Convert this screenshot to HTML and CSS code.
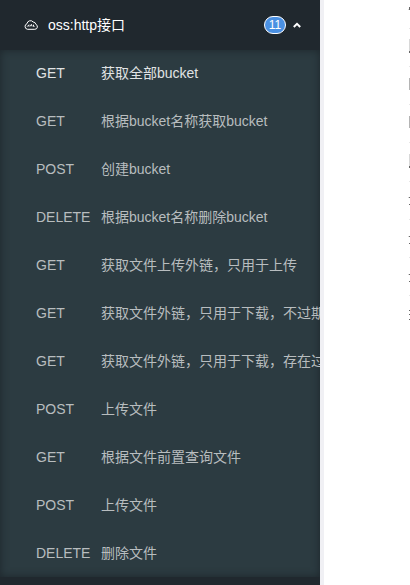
FILE: index.html
```html
<!DOCTYPE html>
<html lang="zh-CN">
<head>
<meta charset="utf-8">
<title>oss:http接口</title>
<link rel="stylesheet" href="styles.css">
</head>
<body>
<div class="app">
  <nav class="sidebar">
    <header class="group">
      <svg class="cloud" viewBox="0 0 14 10" fill="none" stroke="currentColor">
        <path d="M3.5 9.3h7.3a2.6 2.6 0 0 0 1-5A2.7 2.7 0 0 0 9.2 2 3.5 3.5 0 0 0 3 3.7 2.9 2.9 0 0 0 3.5 9.3z"/>
        <path d="M3.2 6.6l1.7-1.8v1.8M6.2 6.4l1.2-2 .7 2M9.5 4.7v1.7h1"/>
      </svg>
      <span class="title">oss:http接口</span>
      <span class="badge">11</span>
      <svg class="arrow" viewBox="0 0 8 6" fill="none" stroke="currentColor" stroke-width="2"><path d="M.8 5L4 1.8 7.2 5"/></svg>
    </header>
    <ul class="menu">
      <li class="active"><span class="method">GET</span><span>获取全部bucket</span></li>
      <li><span class="method">GET</span><span>根据bucket名称获取bucket</span></li>
      <li><span class="method">POST</span><span>创建bucket</span></li>
      <li><span class="method">DELETE</span><span>根据bucket名称删除bucket</span></li>
      <li><span class="method">GET</span><span>获取文件上传外链，只用于上传</span></li>
      <li><span class="method">GET</span><span>获取文件外链，只用于下载，不过期</span></li>
      <li><span class="method">GET</span><span>获取文件外链，只用于下载，存在过期</span></li>
      <li><span class="method">POST</span><span>上传文件</span></li>
      <li><span class="method">GET</span><span>根据文件前置查询文件</span></li>
      <li><span class="method">POST</span><span>上传文件</span></li>
      <li><span class="method">DELETE</span><span>删除文件</span></li>
    </ul>
  </nav>
  <main class="content">
    <svg class="edge" viewBox="0 0 2 585" shape-rendering="crispEdges">
      <path fill="#e6e6e6" d="M1 28h1v1h-1zM1 66h1v1h-1zM1 104h1v1h-1zM1 142h1v1h-1zM1 181h1v1h-1zM1 219h1v1h-1zM1 257h1v1h-1zM1 295h1v1h-1z"/>
      <path fill="#d8d8d8" d="M1 39h1v12h-1zM1 154h1v12h-1zM0 9h1v1h-1zM0 197h1v1h-1zM0 236h1v1h-1zM0 274h1v1h-1z"/>
      <path fill="#b4b4b4" d="M1 78h1v12h-1zM1 116h1v12h-1z"/>
      <path fill="#666" d="M1 7h1v3h-1zM1 51h1v2h-1zM1 166h1v2h-1zM1 197h1v1h-1zM1 204h1v1h-1zM1 236h1v1h-1zM1 243h1v1h-1zM1 274h1v1h-1zM1 281h1v1h-1zM1 310h1v1h-1zM1 314h1v1h-1zM1 319h1v1h-1z"/>
    </svg>
  </main>
</div>
</body>
</html>
```
FILE: styles.css
```css
body {
  margin: 0;
  font: 14px/20px "Liberation Sans", "Noto Sans CJK SC", sans-serif;
}
.app {
  display: flex;
  height: 585px;
  overflow: hidden;
}
.sidebar {
  width: 320px;
  flex: none;
  overflow: hidden;
  background: #20282e;
}
.group {
  display: flex;
  align-items: center;
  box-sizing: border-box;
  height: 50px;
  padding: 0 19px 0 24px;
  color: #fff;
}
.cloud {
  width: 14px;
  height: 10px;
  margin-right: 10px;
}
.title {
  flex: 1;
}
.badge {
  box-sizing: border-box;
  width: 22px;
  height: 18px;
  margin-right: 7px;
  border: 1px solid #fff;
  border-radius: 9px;
  background: #4a90e2;
  font-size: 12px;
  line-height: 16px;
  text-align: center;
}
.arrow {
  width: 8px;
  height: 6px;
}
.menu {
  box-sizing: border-box;
  height: 527px;
  margin: 0;
  padding: 0;
  list-style: none;
  background: #2c3b41;
  box-shadow: inset 0 0 8px #1d262b;
}
.menu li {
  display: flex;
  align-items: center;
  height: 48px;
  padding-left: 36px;
  white-space: nowrap;
  color: #b8bdbf;
}
.menu li:first-child {
  height: 46px;
  padding-bottom: 1px;
}
.menu .active {
  color: #e0e3e4;
}
.method {
  width: 65px;
  flex: none;
}
.content {
  flex: 1;
  display: flex;
  justify-content: flex-end;
  border-left: 4px solid #f0f0f4;
  background: #fff;
}
.edge {
  width: 2px;
  height: 585px;
}
```
